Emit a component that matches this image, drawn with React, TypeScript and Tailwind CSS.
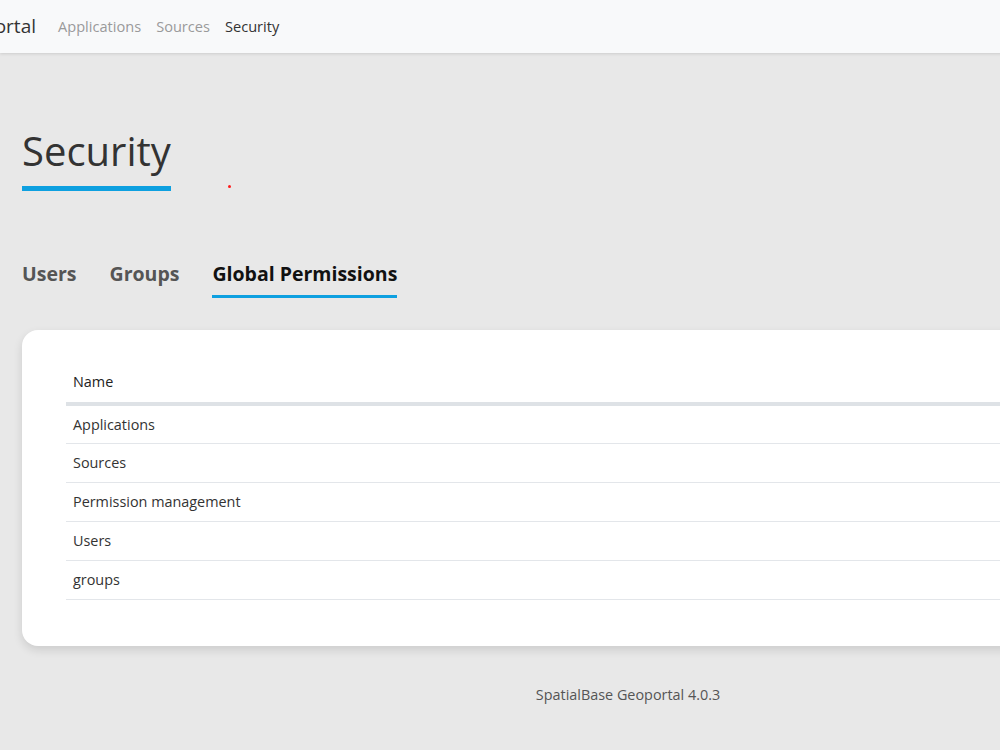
import React from "react";

const rows = ["Applications", "Sources", "Permission management", "Users", "groups"];

export default function App() {
  return (
    <div
      className="min-h-screen w-screen overflow-hidden bg-[#e8e8e8] text-[#333]"
      style={{ fontFamily: '"Open Sans", "Noto Sans", sans-serif' }}
    >
      <div className="w-[1256px]">
        <header className="h-[53px] bg-[#f8f9fa] shadow-[0_1px_3px_rgba(0,0,0,0.12)] flex items-center">
          <div className="w-[36px] overflow-hidden flex justify-end shrink-0">
            <span className="whitespace-nowrap text-[19px] text-[#333]">SpatialBase Geoportal</span>
          </div>
          <nav className="flex items-center gap-[15px] ml-[22px] text-[14.6px]">
            <span className="text-[#9a9a9a]">Applications</span>
            <span className="text-[#9a9a9a]">Sources</span>
            <span className="text-[#333]">Security</span>
          </nav>
        </header>

        <main className="px-[22px]">
          <div className="pt-[70px] flex items-end">
            <div className="flex flex-col">
              <h1 className="text-[40px] leading-[56px] text-[#333]">Security</h1>
              <div className="h-[5px] bg-[#0ea0e0] mt-[7px]" />
            </div>
            <span className="ml-[57px] mb-[3px] w-[3px] h-[3px] rounded-full bg-[#ff1a1a]" />
          </div>

          <div className="mt-[68px] flex gap-[33px] text-[19.5px] font-bold">
            <span className="text-[#555] pb-[9px]">Users</span>
            <span className="text-[#555] pb-[9px]">Groups</span>
            <span className="text-[#111] pb-[7px] border-b-[3px] border-[#0ea0e0]">Global Permissions</span>
          </div>

          <div className="mt-[32px] bg-white rounded-[16px] shadow-[0_4px_10px_rgba(0,0,0,0.12)] px-[44px] pt-[32px] pb-[46px]">
            <table className="w-full text-[14.4px] text-[#333]">
              <thead>
                <tr className="border-b-[4px] border-[#dee2e6]">
                  <th className="text-left font-medium h-[42px] px-[7px] text-[#222]">Name</th>
                </tr>
              </thead>
              <tbody>
                {rows.map((r) => (
                  <tr key={r} className="border-b border-[#e3e6ea]">
                    <td className="h-[39px] px-[7px]">{r}</td>
                  </tr>
                ))}
              </tbody>
            </table>
          </div>

          <footer className="text-center text-[14.4px] text-[#555] pt-[38px] pb-[40px]">
            SpatialBase Geoportal 4.0.3
          </footer>
        </main>
      </div>
    </div>
  );
}
